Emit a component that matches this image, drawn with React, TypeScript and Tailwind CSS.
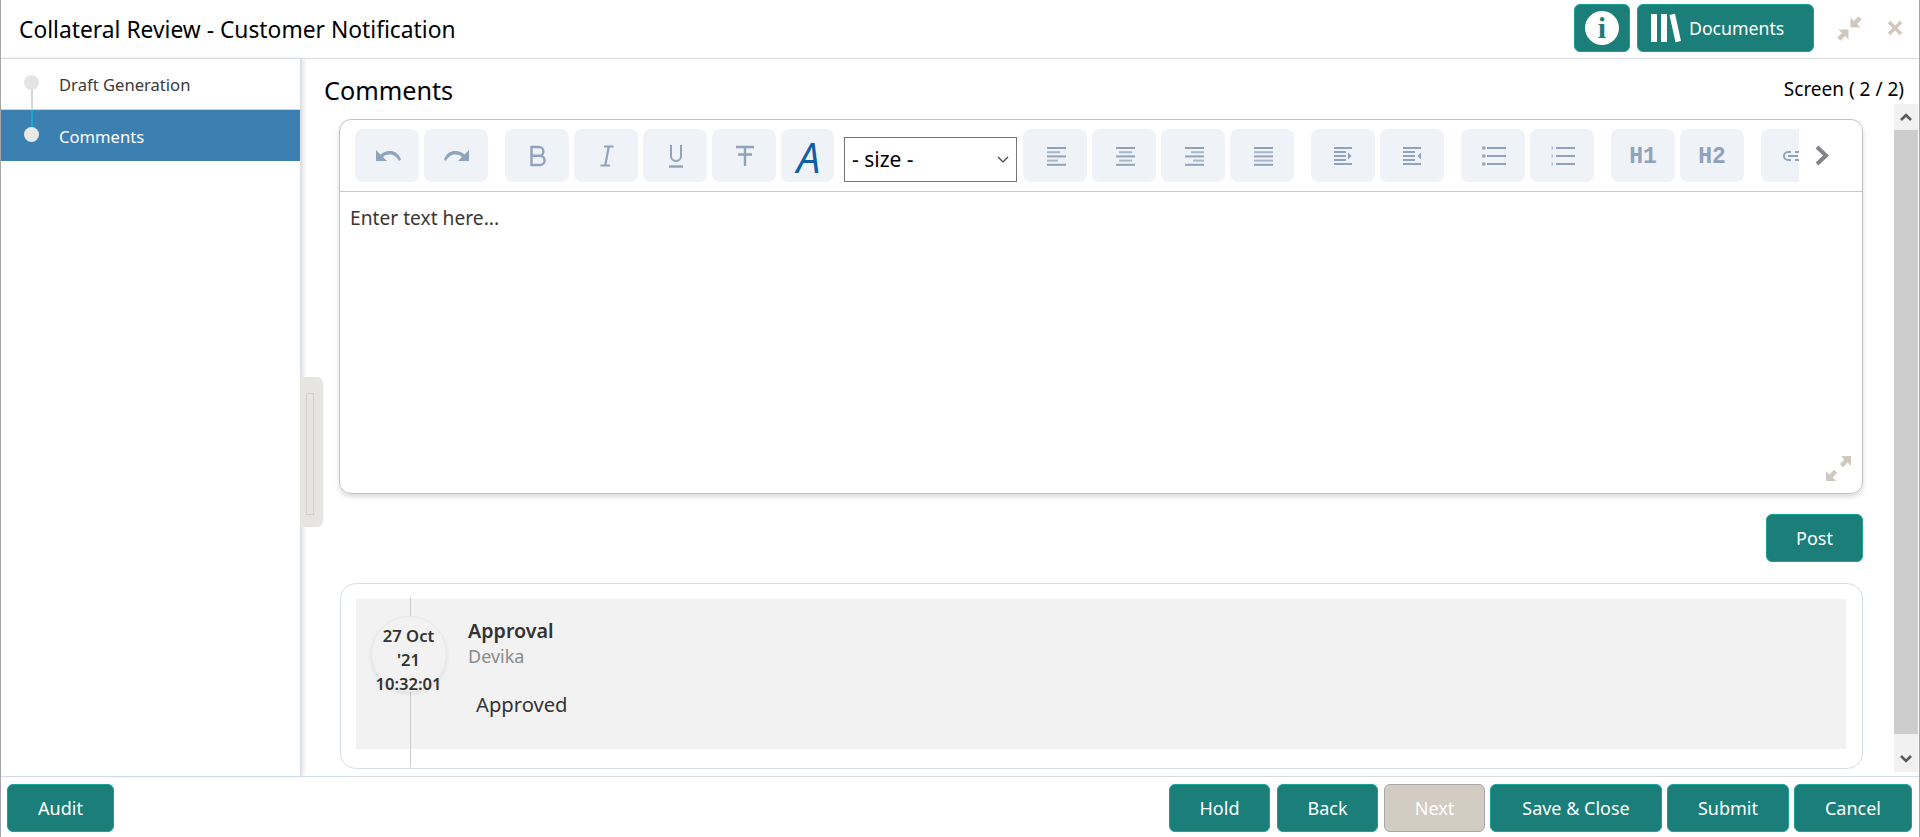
import React from 'react';

const iconColor = '#8fa3bb';

const Lines = ({ rows }: { rows: [number, number][] }) => (
  <svg width="24" height="20" viewBox="0 0 24 20">
    {rows.map(([x, w], i) => (
      <rect key={i} x={x + 4} y={1 + i * 4.2} width={w} height="2" fill={iconColor} opacity={i % 2 ? 0.75 : 1} />
    ))}
  </svg>
);

const Undo = ({ flip }: { flip?: boolean }) => (
  <svg width="27" height="14" viewBox="0 0 27 14" className={flip ? '-scale-x-100' : 'ml-[2px]'}>
    <path d="M1 1v11h11l-4-4c2-1.800 4-2.500 6.500-2.500 4 0 7 1.800 9.500 6.500l2-1.500C24 4.500 19.500 2 14.500 2 11 2 8 3.300 5.500 5.500z" fill={iconColor} />
  </svg>
);

const ToolBtn = ({ children, w = 'w-[64px]' }: { children?: React.ReactNode; w?: string }) => (
  <div className={`${w} h-[53px] shrink-0 rounded-[8px] bg-[#eff2f7] flex items-center justify-center`}>{children}</div>
);

const Indent = ({ out }: { out?: boolean }) => (
  <svg width="18" height="20" viewBox="0 0 18 20">
    <rect x="0" y="1" width="18" height="2" fill={iconColor} />
    <rect x="0" y="5" width="12" height="2" fill={iconColor} />
    <rect x="0" y="9" width="12" height="2" fill={iconColor} />
    <rect x="0" y="13" width="12" height="2" fill={iconColor} />
    <rect x="0" y="17" width="18" height="2" fill={iconColor} />
    <path d={out ? 'M18 6.500v7l-3.500-3.500z' : 'M14 6.500v7l3.500-3.500z'} fill={iconColor} />
  </svg>
);

const BulletList = ({ numbered }: { numbered?: boolean }) => (
  <svg width="24" height="20" viewBox="0 0 24 20" className="ml-[2px]">
    {[2, 10, 18].map((y) => (
      <g key={y}>
        {numbered ? (
          <rect x="0.500" y={y - 1.500} width="1.500" height="3" fill={iconColor} opacity="0.7" />
        ) : (
          <circle cx="1.800" cy={y} r="1.800" fill={iconColor} />
        )}
        <rect x="5" y={y - 1} width="19" height="2" fill={iconColor} />
      </g>
    ))}
  </svg>
);

const Btn = ({ label, w, off }: { label: string; w: string; off?: boolean }) => (
  <div
    className={`${w} h-[48px] rounded-[6px] border flex items-center justify-center text-[18px] text-white ${
      off ? 'bg-[#d3ccc3] border-[#a8a8a8]' : 'bg-[#1b7e78] border-[#14a595]'
    }`}
  >
    {label}
  </div>
);

const ExpandIcon = ({ color = '#cfc8bf' }: { color?: string }) => (
  <svg width="25" height="25" viewBox="0 0 25 25">
    <path d="M15 0h10v10l-3.400-3.400-4.600 4.600-3.200-3.200 4.600-4.600zM0 25V15l3.400 3.400 4.600-4.600 3.200 3.200-4.600 4.600L10 25z" fill={color} />
  </svg>
);

const CompressIcon = () => (
  <svg width="25" height="25" viewBox="0 0 25 25">
    <path d="M13.500 1.500v10h10l-3.400-3.400 4.600-4.600L21.500.3l-4.600 4.600zM11.500 23.500v-10h-10l3.400 3.400-4.600 4.600 3.200 3.200 4.600-4.600z" fill="#cfc8bf" />
  </svg>
);

export default function App() {
  return (
    <div className="relative w-[1920px] h-[837px] flex flex-col bg-white border-x border-x-[#a6a6a6] overflow-hidden font-['Noto_Sans',sans-serif] text-[#2c2c2c]">
      {/* header */}
      <div className="h-[59px] shrink-0 flex items-center border-b border-[#d8dce0] pl-[18px] pr-[16px]">
        <div className="text-[22.800px] text-black pt-[3px]">Collateral Review - Customer Notification</div>
        <div className="ml-auto flex items-center -mt-[2px]">
          <div className="w-[56px] h-[48px] rounded-[6px] bg-[#1b7e78] border border-[#14a595] flex items-center justify-center">
            <div className="w-[34px] h-[34px] rounded-full bg-white flex items-center justify-center font-['Liberation_Serif',serif] font-bold text-[30px] leading-none text-[#1b7e78]">
              i
            </div>
          </div>
          <div className="ml-[7px] w-[177px] h-[48px] rounded-[6px] bg-[#1b7e78] border border-[#14a595] flex items-center pl-[13px] text-[17.700px] text-white">
            <svg width="30" height="30" viewBox="0 0 30 30">
              <rect x="0" y="1" width="6" height="28" rx="0.500" fill="#fff" />
              <rect x="10" y="1" width="6" height="28" rx="0.500" fill="#fff" />
              <path d="M18.500 2l5.500-1.300 6 27.300-5.500 1.300z" fill="#fff" />
            </svg>
            <span className="ml-[8px]">Documents</span>
          </div>
          <div className="ml-[23px]">
            <CompressIcon />
          </div>
          <svg className="ml-[25px]" width="16" height="16" viewBox="0 0 16 16">
            <path d="M2 2l12 12M14 2L2 14" stroke="#cfc8bf" strokeWidth="3.400" />
          </svg>
        </div>
      </div>

      {/* body */}
      <div className="relative flex-1 flex min-h-0">
        <div className="w-[301px] shrink-0 border-r-2 border-[#dde1e8] shadow-[2px_0_4px_rgba(200,205,215,0.5)]">
          <div className="relative h-[51px] flex items-center pl-[58px] pt-[3px] text-[16.600px] text-[#3a3a3a] border-b border-[#c9d3dc]">
            Draft Generation
            <div className="absolute left-[30px] top-[25px] w-[2px] h-[26px] bg-[#d6d6d6]"></div>
            <div className="absolute left-[23px] top-[16px] w-[15px] h-[15px] rounded-full bg-[#e4e4e4]"></div>
          </div>
          <div className="relative h-[51px] flex items-center pl-[58px] pt-[3px] text-[16.600px] text-white bg-[#3c80b2]">
            Comments
            <div className="absolute left-[30px] top-0 w-[2px] h-[20px] bg-[#1ea5cf]"></div>
            <div className="absolute left-[23px] top-[17px] w-[15px] h-[15px] rounded-full bg-[#e8e8e8]"></div>
          </div>
        </div>

        {/* drag handle */}
        <div className="absolute left-[299px] top-[318px] w-[23px] h-[150px] rounded-r-[6px] bg-[#e6e5e1] pl-[6px] pt-[16px]">
          <div className="w-[8px] h-[122px] border border-[#cfcfcc]"></div>
        </div>

        <div className="flex-1 flex flex-col min-w-0">
          <div className="h-[45px] shrink-0 flex items-center justify-between pl-[22px] pr-[15px]">
            <div className="text-[25.200px] text-black pt-[19px]">Comments</div>
            <div className="text-[19px] text-black pt-[16px]">Screen ( 2 / 2)</div>
          </div>

          <div className="h-[668px] flex">
            <div className="flex-1 min-w-0 pl-[37px] pr-[31px] pt-[15px]">
              {/* editor */}
              <div className="h-[375px] border border-[#bfc2c6] rounded-[12px] shadow-[0_3px_5px_rgba(0,0,0,0.14)] flex flex-col">
                <div className="relative h-[72px] shrink-0 border-b border-[#c3c6ca] flex items-center pl-[15px]">
                  <div className="w-[1444px] h-[71px] overflow-hidden flex items-center">
                    <div className="flex gap-[5px]">
                      <ToolBtn><Undo /></ToolBtn>
                      <ToolBtn><Undo flip /></ToolBtn>
                    </div>
                    <div className="flex gap-[5px] ml-[17px]">
                      <ToolBtn>
                        <svg width="18" height="22" viewBox="0 0 18 22" fill="none" stroke={iconColor} strokeWidth="2.400" className="ml-[1px]">
                          <path d="M2.500 2h7.500a4.300 4.300 0 0 1 0 8.800H2.500zM2.500 10.800h8.500a4.600 4.600 0 0 1 0 9.200H2.500z" />
                        </svg>
                      </ToolBtn>
                      <ToolBtn>
                        <svg width="14" height="22" viewBox="0 0 14 22" fill="none" stroke={iconColor} strokeWidth="2.200" className="ml-[2px]">
                          <path d="M4 1.500h9.500M.5 20.500H10M8.800 1.500L5.200 20.500" />
                        </svg>
                      </ToolBtn>
                      <ToolBtn>
                        <svg width="14" height="24" viewBox="0 0 14 24" fill="none" stroke={iconColor} strokeWidth="2" className="ml-[2px]">
                          <path d="M2 1v11a5 5 0 0 0 10 0V1" />
                          <path d="M0 22.500h14" strokeWidth="2.400" />
                        </svg>
                      </ToolBtn>
                      <ToolBtn>
                        <svg width="18" height="22" viewBox="0 0 18 22" fill="none" stroke={iconColor} strokeWidth="2.400" className="ml-[2px]">
                          <path d="M0 2h18M9 2v19M2 9.500h14" />
                        </svg>
                      </ToolBtn>
                      <ToolBtn w="w-[53px]">
                        <span className="text-[42px] leading-none italic text-[#0e5ea8] font-['Open_Sans',sans-serif] pl-[2px] pt-[2px]">A</span>
                      </ToolBtn>
                    </div>
                    <div className="ml-[10px] mt-[8px] w-[173px] h-[45px] shrink-0 border border-[#767676] flex items-center pl-[7px] pr-[7px] text-[21px] text-black">
                      <span>- size -</span>
                      <svg className="ml-auto" width="12" height="7" viewBox="0 0 12 7" fill="none" stroke="#444" strokeWidth="1.200">
                        <path d="M1 1l5 5 5-5" />
                      </svg>
                    </div>
                    <div className="flex gap-[5px] ml-[6px]">
                      <ToolBtn><Lines rows={[[0, 19], [0, 13], [0, 19], [0, 11], [0, 19]]} /></ToolBtn>
                      <ToolBtn><Lines rows={[[0, 19], [3, 13], [0, 19], [3, 13], [0, 19]]} /></ToolBtn>
                      <ToolBtn><Lines rows={[[0, 19], [6, 13], [0, 19], [8, 11], [0, 19]]} /></ToolBtn>
                      <ToolBtn><Lines rows={[[0, 19], [0, 19], [0, 19], [0, 19], [0, 19]]} /></ToolBtn>
                    </div>
                    <div className="flex gap-[5px] ml-[17px]">
                      <ToolBtn><Indent /></ToolBtn>
                      <ToolBtn><Indent out /></ToolBtn>
                    </div>
                    <div className="flex gap-[5px] ml-[17px]">
                      <ToolBtn><BulletList /></ToolBtn>
                      <ToolBtn><BulletList numbered /></ToolBtn>
                    </div>
                    <div className="flex gap-[5px] ml-[17px] font-['Liberation_Mono',monospace] font-bold text-[23px] text-[#8fa3bb]">
                      <ToolBtn><span className="pt-[3px]">H1</span></ToolBtn>
                      <ToolBtn><span className="pt-[3px]">H2</span></ToolBtn>
                    </div>
                    <div className="ml-[17px]">
                      <ToolBtn>
                        <svg width="20" height="12" viewBox="0 0 20 12" fill="none" stroke={iconColor} strokeWidth="2">
                          <path d="M8 2H5a4 4 0 0 0 0 8h3M12 2h3a4 4 0 0 1 0 8h-3M5 6h10" />
                        </svg>
                      </ToolBtn>
                    </div>
                  </div>
                  <svg className="ml-[16px]" width="15" height="21" viewBox="0 0 15 21" fill="none" stroke="#858289" strokeWidth="4">
                    <path d="M2 2l9 8.500-9 8.500" />
                  </svg>
                </div>
                <div className="relative flex-1 px-[10px] pt-[12px] text-[19.200px] text-[#3d3633]">
                  Enter text here...
                  <div className="absolute right-[11px] bottom-[12px]">
                    <ExpandIcon />
                  </div>
                </div>
              </div>

              <div className="flex justify-end mt-[20px]">
                <Btn label="Post" w="w-[97px]" />
              </div>

              {/* comment card */}
              <div className="relative mt-[21px] ml-px h-[186px] border border-[#d6dee6] rounded-[16px] pl-[15px] pr-[16px] py-[15px]">
                <div className="h-[150px] bg-[#f2f2f2] flex">
                  <div className="relative w-[112px] shrink-0">
                    <div className="absolute left-[54px] top-[-2px] w-px h-[170px] bg-[#cccccc]"></div>
                    <div className="absolute left-[15px] top-[17px] w-[76px] h-[76px] rounded-full bg-[#f2f2f2] border border-[#e8e8e8] shadow-[0_2px_4px_rgba(0,0,0,0.08)]"></div>
                    <div className="absolute left-0 top-[25px] w-[105px] text-center text-[16.600px] font-semibold leading-[24px] text-[#333]">
                      <div>27 Oct</div>
                      <div>'21</div>
                      <div>10:32:01</div>
                    </div>
                  </div>
                  <div className="pt-[18px]">
                    <div className="text-[19.700px] leading-[27px] font-semibold text-[#333]">Approval</div>
                    <div className="text-[18px] leading-[24px] text-[#8a8a8a]">Devika</div>
                    <div className="ml-[8px] mt-[23px] text-[20.200px] leading-[26px] text-[#333]">Approved</div>
                  </div>
                </div>
              </div>
            </div>

            {/* scrollbar */}
            <div className="w-[24px] shrink-0 mr-px flex flex-col bg-[#f1f1f1]">
              <div className="h-[26px] flex items-center justify-center">
                <svg width="12" height="8" viewBox="0 0 12 8" fill="none" stroke="#5f5a55" strokeWidth="2.600">
                  <path d="M1 7l5-5 5 5" />
                </svg>
              </div>
              <div className="flex-1 bg-[#cdcdcd]"></div>
              <div className="h-[38px] flex items-center justify-center pt-[12px]">
                <svg width="12" height="8" viewBox="0 0 12 8" fill="none" stroke="#5f5a55" strokeWidth="2.600">
                  <path d="M1 1l5 5 5-5" />
                </svg>
              </div>
            </div>
          </div>
        </div>
      </div>

      {/* footer */}
      <div className="h-[61px] shrink-0 border-t border-[#d6dde3] flex items-start pt-[7px] pl-[6px] pr-[7px]">
        <Btn label="Audit" w="w-[107px]" />
        <div className="ml-auto flex">
          <Btn label="Hold" w="w-[101px]" />
          <div className="ml-[7px]"><Btn label="Back" w="w-[101px]" /></div>
          <div className="ml-[6px]"><Btn label="Next" w="w-[101px]" off /></div>
          <div className="ml-[5px]"><Btn label="Save & Close" w="w-[172px]" /></div>
          <div className="ml-[5px]"><Btn label="Submit" w="w-[122px]" /></div>
          <div className="ml-[5px]"><Btn label="Cancel" w="w-[118px]" /></div>
        </div>
      </div>
    </div>
  );
}
